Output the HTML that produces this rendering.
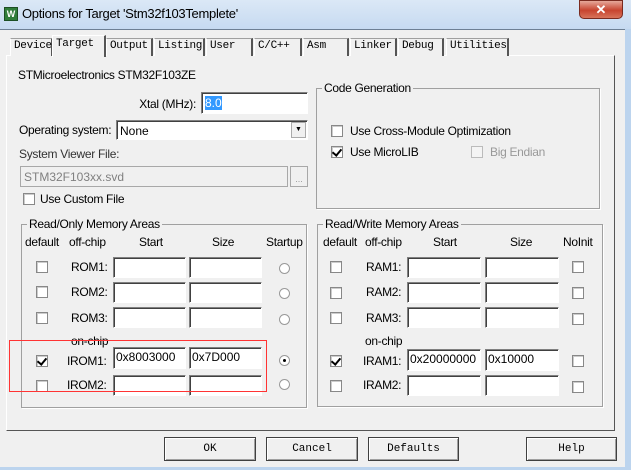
<!DOCTYPE html>
<html><head><meta charset="utf-8"><style>
*{box-sizing:border-box;margin:0;padding:0}
body{width:631px;height:470px;overflow:hidden;background:#bcd4ee;position:relative;font-family:"Liberation Sans",sans-serif;font-size:12px;color:#000}
.a{position:absolute}
.t{position:absolute;white-space:nowrap;letter-spacing:-0.3px}
.tab{position:absolute;top:38px;height:18px;border:1px solid #a0a0a0;border-left:1px solid #fff;border-right:2px solid #555;border-bottom:none;background:#f0f0f0;font-family:"Liberation Mono",monospace;font-size:11px;padding:1px 0 0 3px;letter-spacing:-0.3px}
.inp{position:absolute;background:#fff;border:1px solid;border-color:#808080 #fff #fff #808080;box-shadow:inset 1px 1px 0 #404040}
.cb{position:absolute;width:12px;height:12px;border:1px solid #888;background:#fff;box-shadow:inset 1px 1px 0 #ccc}
.cb.k::after{content:"";position:absolute;left:2px;top:0px;width:4px;height:7px;border:solid #000;border-width:0 2px 2px 0;transform:rotate(40deg)}
.rd{position:absolute;width:11px;height:11px;border-radius:50%;border:1px solid #999;background:#fff}
.grp{position:absolute;border:1px solid #a0a0a0;box-shadow:1px 1px 0 #fff}
.lg{position:absolute;top:-8px;left:5px;background:#f0f0f0;padding:0 2px;white-space:nowrap;letter-spacing:-0.3px}
.btn{position:absolute;top:437px;height:24px;border:1px solid #404040;background:#f0f0f0;box-shadow:inset 1px 1px 0 #fff,inset -1px -1px 0 #a0a0a0;font-family:"Liberation Mono",monospace;font-size:11px;text-align:center;line-height:22px}
</style></head><body>
<div class="a" style="left:0;top:0;width:631px;height:29px;background:linear-gradient(#dbe8f6,#c6daf1)"></div>
<div class="a" style="left:4px;top:7px;width:14px;height:14px;background:#2f7d3a;border:1px solid #1c4f24;color:#fff;font-size:9px;font-weight:bold;text-align:center;line-height:12px">W</div>
<div class="t" style="left:22px;top:6px;font-size:13px">Options for Target 'Stm32f103Templete'</div>
<div class="a" style="left:579px;top:0;width:44px;height:19px;border-radius:0 0 5px 5px;background:linear-gradient(#e6a89a,#c7442f 55%,#d8735a);border:1px solid #7a2b20;color:#fff;font-weight:bold;text-align:center;font-size:13px;line-height:17px">✕</div>
<div class="a" style="left:0;top:29px;width:625px;height:438px;background:#f0f0f0;border-top:1px solid #6d7f94"></div>
<div class="a" style="left:6px;top:55px;width:609px;height:376px;border:1px solid;border-color:#fff #555 #555 #fff;background:#f0f0f0"></div>
<div class="tab" style="left:10px;width:43px">Device</div>
<div class="tab" style="left:106px;width:47px">Output</div>
<div class="tab" style="left:154px;width:51px">Listing</div>
<div class="tab" style="left:206px;width:47px">User</div>
<div class="tab" style="left:254px;width:48px">C/C++</div>
<div class="tab" style="left:303px;width:46px">Asm</div>
<div class="tab" style="left:350px;width:47px">Linker</div>
<div class="tab" style="left:398px;width:46px">Debug</div>
<div class="tab" style="left:446px;width:63px">Utilities</div>
<div class="tab" style="left:52px;top:35px;height:22px;width:54px;padding-top:2px;border-bottom:none;border-top-color:#fff">Target</div>

<div class="t" style="left:18px;top:68px">STMicroelectronics STM32F103ZE</div>
<div class="t" style="left:130px;top:97px;width:66px;text-align:right">Xtal (MHz):</div>
<div class="inp" style="left:201px;top:92px;width:107px;height:22px"><span style="position:absolute;left:3px;top:3px;background:#3399ff;color:#fff;line-height:14px">8.0</span></div>
<div class="t" style="left:19px;top:123px">Operating system:</div>
<div class="inp" style="left:116px;top:120px;width:192px;height:20px"><span style="position:absolute;left:3px;top:3px">None</span><div class="a" style="right:1px;top:1px;width:15px;height:16px;background:#f0f0f0;border:1px solid #aaa;font-size:7px;text-align:center;line-height:14px">▼</div></div>
<div class="t" style="left:19px;top:147px;color:#333">System Viewer File:</div>
<div class="a" style="left:20px;top:166px;width:268px;height:21px;background:#f0f0f0;border:1px solid #a8a8a8"><span style="position:absolute;left:3px;top:3px;color:#808080">STM32F103xx.svd</span></div>
<div class="a" style="left:290px;top:166px;width:18px;height:21px;border:1px solid #a8a8a8;color:#999;font-size:9px;text-align:center;line-height:24px">...</div>
<div class="cb" style="left:23px;top:193px"></div>
<div class="t" style="left:40px;top:192px">Use Custom File</div>

<div class="grp" style="left:316px;top:88px;width:284px;height:121px"><div class="lg">Code Generation</div></div>
<div class="cb" style="left:331px;top:125px"></div><div class="t" style="left:350px;top:124px">Use Cross-Module Optimization</div>
<div class="cb k" style="left:331px;top:146px"></div><div class="t" style="left:350px;top:145px">Use MicroLIB</div>
<div class="cb" style="left:471px;top:146px;border-color:#bbb;background:#f4f4f4;box-shadow:none"></div><div class="t" style="left:490px;top:145px;color:#999">Big Endian</div>

<div class="grp" style="left:21px;top:224px;width:286px;height:184px"><div class="lg">Read/Only Memory Areas</div></div>
<div class="t" style="left:25px;top:235px">default</div><div class="t" style="left:69px;top:235px">off-chip</div><div class="t" style="left:139px;top:235px">Start</div><div class="t" style="left:212px;top:235px">Size</div><div class="t" style="left:266px;top:235px">Startup</div>
<div class="cb" style="left:36px;top:261px"></div><div class="t" style="left:71px;top:260px">ROM1:</div><div class="inp" style="left:113px;top:257px;width:73px;height:21px"></div><div class="inp" style="left:189px;top:257px;width:73px;height:21px"></div><div class="rd" style="left:279px;top:263px"></div>
<div class="cb" style="left:36px;top:286px"></div><div class="t" style="left:71px;top:285px">ROM2:</div><div class="inp" style="left:113px;top:282px;width:73px;height:21px"></div><div class="inp" style="left:189px;top:282px;width:73px;height:21px"></div><div class="rd" style="left:279px;top:288px"></div>
<div class="cb" style="left:36px;top:312px"></div><div class="t" style="left:71px;top:311px">ROM3:</div><div class="inp" style="left:113px;top:307px;width:73px;height:21px"></div><div class="inp" style="left:189px;top:307px;width:73px;height:21px"></div><div class="rd" style="left:279px;top:314px"></div>
<div class="t" style="left:71px;top:334px">on-chip</div>
<div class="cb k" style="left:36px;top:355px"></div><div class="t" style="left:67px;top:354px">IROM1:</div><div class="inp" style="left:113px;top:347px;width:73px;height:22px"><span style="position:absolute;left:2px;top:2px">0x8003000</span></div><div class="inp" style="left:189px;top:347px;width:73px;height:22px"><span style="position:absolute;left:2px;top:2px">0x7D000</span></div><div class="rd" style="left:279px;top:355px"><div class="a" style="left:3px;top:3px;width:3px;height:3px;background:#000;border-radius:50%"></div></div>
<div class="cb" style="left:36px;top:380px"></div><div class="t" style="left:67px;top:378px">IROM2:</div><div class="inp" style="left:113px;top:375px;width:73px;height:21px"></div><div class="inp" style="left:189px;top:375px;width:73px;height:21px"></div><div class="rd" style="left:279px;top:379px"></div>
<div class="a" style="left:9px;top:340px;width:258px;height:52px;border:1px solid #ff3333;z-index:10"></div>

<div class="grp" style="left:317px;top:224px;width:286px;height:183px"><div class="lg">Read/Write Memory Areas</div></div>
<div class="t" style="left:323px;top:235px">default</div><div class="t" style="left:365px;top:235px">off-chip</div><div class="t" style="left:433px;top:235px">Start</div><div class="t" style="left:510px;top:235px">Size</div><div class="t" style="left:563px;top:235px">NoInit</div>
<div class="cb" style="left:330px;top:261px"></div><div class="t" style="left:366px;top:260px">RAM1:</div><div class="inp" style="left:407px;top:257px;width:74px;height:21px"></div><div class="inp" style="left:485px;top:257px;width:74px;height:21px"></div><div class="cb" style="left:572px;top:261px"></div>
<div class="cb" style="left:330px;top:287px"></div><div class="t" style="left:366px;top:285px">RAM2:</div><div class="inp" style="left:407px;top:282px;width:74px;height:21px"></div><div class="inp" style="left:485px;top:282px;width:74px;height:21px"></div><div class="cb" style="left:572px;top:287px"></div>
<div class="cb" style="left:330px;top:312px"></div><div class="t" style="left:366px;top:311px">RAM3:</div><div class="inp" style="left:407px;top:307px;width:74px;height:21px"></div><div class="inp" style="left:485px;top:307px;width:74px;height:21px"></div><div class="cb" style="left:572px;top:313px"></div>
<div class="t" style="left:365px;top:334px">on-chip</div>
<div class="cb k" style="left:330px;top:355px"></div><div class="t" style="left:363px;top:354px">IRAM1:</div><div class="inp" style="left:407px;top:349px;width:74px;height:22px"><span style="position:absolute;left:2px;top:2px">0x20000000</span></div><div class="inp" style="left:485px;top:349px;width:74px;height:22px"><span style="position:absolute;left:2px;top:2px">0x10000</span></div><div class="cb" style="left:572px;top:355px"></div>
<div class="cb" style="left:330px;top:380px"></div><div class="t" style="left:363px;top:378px">IRAM2:</div><div class="inp" style="left:407px;top:375px;width:74px;height:21px"></div><div class="inp" style="left:485px;top:375px;width:74px;height:21px"></div><div class="cb" style="left:572px;top:381px"></div>

<div class="btn" style="left:164px;width:92px">OK</div>
<div class="btn" style="left:266px;width:92px">Cancel</div>
<div class="btn" style="left:368px;width:91px">Defaults</div>
<div class="btn" style="left:526px;width:91px">Help</div>
</body></html>
